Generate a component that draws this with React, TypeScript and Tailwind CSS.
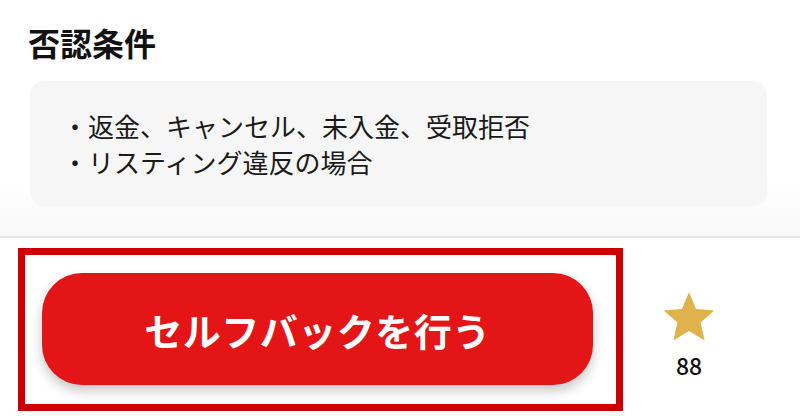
import React from "react";

export default function App() {
  return (
    <div
      className="w-[800px] h-[420px] bg-white overflow-hidden flex flex-col text-[#111]"
      style={{ fontFamily: '"Noto Sans CJK JP", "Noto Sans", sans-serif' }}
    >
      <div className="h-[236px] shrink-0 flex flex-col pl-[28px] pr-[33px] pt-[20px] bg-gradient-to-b from-white from-75% to-[#f8f8f8]">
        <h2 className="text-[32px] leading-[44px] font-bold text-[#111]">否認条件</h2>
        <div className="mt-[17px] ml-[2px] h-[125px] rounded-[14px] bg-[#f6f6f6] pl-[32px] flex flex-col justify-center text-[26px] leading-[36px] text-[#1a1a1a]">
          <p>・返金、キャンセル、未入金、受取拒否</p>
          <p>・リスティング違反の場合</p>
        </div>
      </div>
      <div className="flex-1 border-t-2 border-[#e3e3e3] bg-white flex items-start pt-[10px] pl-[18px]">
        <div className="border-[7px] border-[#cc0000] pl-[17px] pr-[23px] pt-[18px] pb-[19px]">
          <button className="w-[551px] h-[112px] rounded-[40px] bg-[#e31516] text-white text-[38px] font-bold tracking-[0.5px] shadow-[0_6px_12px_rgba(0,0,0,0.22)] flex items-center justify-center">
            セルフバックを行う
          </button>
        </div>
        <div className="ml-[38px] mt-[43px] flex flex-col items-center w-[56px]">
          <svg width="56" height="53" viewBox="0 0 24 23">
            <path
              d="M12 0.5l3.09 7.26 7.91.7-6 5.23 1.79 7.74L12 17.4l-6.79 4.03L7 13.69 1 8.46l7.91-.7z"
              fill="#e0b24b"
            />
          </svg>
          <span className="mt-[8px] text-[23px] leading-[27px] font-medium text-[#111]">88</span>
        </div>
      </div>
    </div>
  );
}
